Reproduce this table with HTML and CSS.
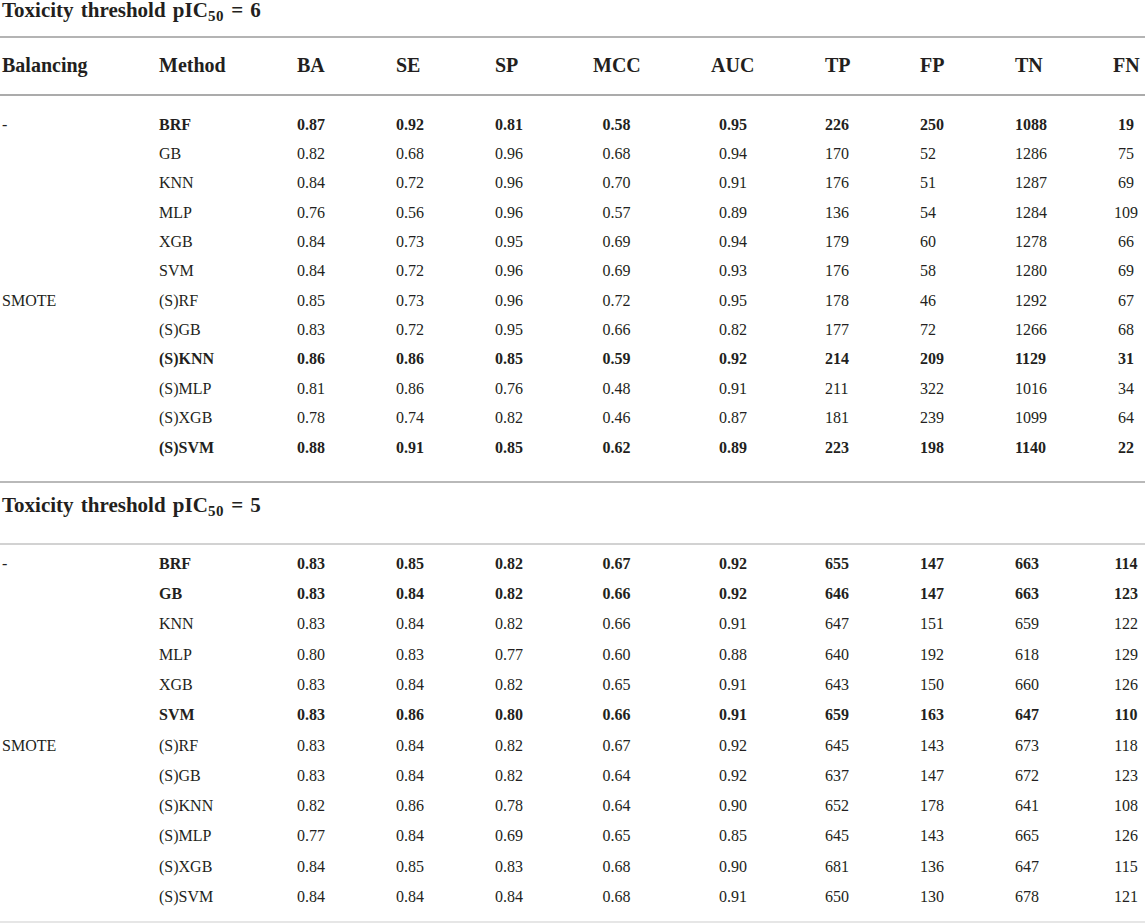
FILE: index.html
```html
<!DOCTYPE html>
<html>
  <head>
    <meta charset="utf-8">
    <title>Toxicity threshold results</title>
    <link rel="stylesheet" href="styles.css">
  </head>
  <body>
    <table class="results">
      <colgroup>
        <col class="c-bal">
        <col class="c-method">
        <col class="c-ba">
        <col class="c-se">
        <col class="c-sp">
        <col class="c-mcc">
        <col class="c-auc">
        <col class="c-tp">
        <col class="c-fp">
        <col class="c-tn">
        <col class="c-fn">
      </colgroup>

      <!-- pIC50 = 6 -->
      <tbody class="sec sec-6">
        <tr class="sec-title">
          <th colspan="11">Toxicity threshold pIC<sub>50</sub> = 6</th>
        </tr>
        <tr class="head">
          <th>Balancing</th><th>Method</th><th>BA</th><th>SE</th><th>SP</th><th>MCC</th><th>AUC</th><th>TP</th><th>FP</th><th>TN</th><th>FN</th>
        </tr>
        <tr class="first best"><td>-</td><td>BRF</td><td>0.87</td><td>0.92</td><td>0.81</td><td>0.58</td><td>0.95</td><td>226</td><td>250</td><td>1088</td><td>19</td></tr>
        <tr><td></td><td>GB</td><td>0.82</td><td>0.68</td><td>0.96</td><td>0.68</td><td>0.94</td><td>170</td><td>52</td><td>1286</td><td>75</td></tr>
        <tr><td></td><td>KNN</td><td>0.84</td><td>0.72</td><td>0.96</td><td>0.70</td><td>0.91</td><td>176</td><td>51</td><td>1287</td><td>69</td></tr>
        <tr><td></td><td>MLP</td><td>0.76</td><td>0.56</td><td>0.96</td><td>0.57</td><td>0.89</td><td>136</td><td>54</td><td>1284</td><td>109</td></tr>
        <tr><td></td><td>XGB</td><td>0.84</td><td>0.73</td><td>0.95</td><td>0.69</td><td>0.94</td><td>179</td><td>60</td><td>1278</td><td>66</td></tr>
        <tr><td></td><td>SVM</td><td>0.84</td><td>0.72</td><td>0.96</td><td>0.69</td><td>0.93</td><td>176</td><td>58</td><td>1280</td><td>69</td></tr>
        <tr><td>SMOTE</td><td>(S)RF</td><td>0.85</td><td>0.73</td><td>0.96</td><td>0.72</td><td>0.95</td><td>178</td><td>46</td><td>1292</td><td>67</td></tr>
        <tr><td></td><td>(S)GB</td><td>0.83</td><td>0.72</td><td>0.95</td><td>0.66</td><td>0.82</td><td>177</td><td>72</td><td>1266</td><td>68</td></tr>
        <tr class="best"><td></td><td>(S)KNN</td><td>0.86</td><td>0.86</td><td>0.85</td><td>0.59</td><td>0.92</td><td>214</td><td>209</td><td>1129</td><td>31</td></tr>
        <tr><td></td><td>(S)MLP</td><td>0.81</td><td>0.86</td><td>0.76</td><td>0.48</td><td>0.91</td><td>211</td><td>322</td><td>1016</td><td>34</td></tr>
        <tr><td></td><td>(S)XGB</td><td>0.78</td><td>0.74</td><td>0.82</td><td>0.46</td><td>0.87</td><td>181</td><td>239</td><td>1099</td><td>64</td></tr>
        <tr class="last best"><td></td><td>(S)SVM</td><td>0.88</td><td>0.91</td><td>0.85</td><td>0.62</td><td>0.89</td><td>223</td><td>198</td><td>1140</td><td>22</td></tr>
      </tbody>

      <!-- pIC50 = 5 -->
      <tbody class="sec sec-5">
        <tr class="sec-title">
          <th colspan="11">Toxicity threshold pIC<sub>50</sub> = 5</th>
        </tr>
        <tr class="first best"><td>-</td><td>BRF</td><td>0.83</td><td>0.85</td><td>0.82</td><td>0.67</td><td>0.92</td><td>655</td><td>147</td><td>663</td><td>114</td></tr>
        <tr class="best"><td></td><td>GB</td><td>0.83</td><td>0.84</td><td>0.82</td><td>0.66</td><td>0.92</td><td>646</td><td>147</td><td>663</td><td>123</td></tr>
        <tr><td></td><td>KNN</td><td>0.83</td><td>0.84</td><td>0.82</td><td>0.66</td><td>0.91</td><td>647</td><td>151</td><td>659</td><td>122</td></tr>
        <tr><td></td><td>MLP</td><td>0.80</td><td>0.83</td><td>0.77</td><td>0.60</td><td>0.88</td><td>640</td><td>192</td><td>618</td><td>129</td></tr>
        <tr><td></td><td>XGB</td><td>0.83</td><td>0.84</td><td>0.82</td><td>0.65</td><td>0.91</td><td>643</td><td>150</td><td>660</td><td>126</td></tr>
        <tr class="best"><td></td><td>SVM</td><td>0.83</td><td>0.86</td><td>0.80</td><td>0.66</td><td>0.91</td><td>659</td><td>163</td><td>647</td><td>110</td></tr>
        <tr><td>SMOTE</td><td>(S)RF</td><td>0.83</td><td>0.84</td><td>0.82</td><td>0.67</td><td>0.92</td><td>645</td><td>143</td><td>673</td><td>118</td></tr>
        <tr><td></td><td>(S)GB</td><td>0.83</td><td>0.84</td><td>0.82</td><td>0.64</td><td>0.92</td><td>637</td><td>147</td><td>672</td><td>123</td></tr>
        <tr><td></td><td>(S)KNN</td><td>0.82</td><td>0.86</td><td>0.78</td><td>0.64</td><td>0.90</td><td>652</td><td>178</td><td>641</td><td>108</td></tr>
        <tr><td></td><td>(S)MLP</td><td>0.77</td><td>0.84</td><td>0.69</td><td>0.65</td><td>0.85</td><td>645</td><td>143</td><td>665</td><td>126</td></tr>
        <tr><td></td><td>(S)XGB</td><td>0.84</td><td>0.85</td><td>0.83</td><td>0.68</td><td>0.90</td><td>681</td><td>136</td><td>647</td><td>115</td></tr>
        <tr class="last"><td></td><td>(S)SVM</td><td>0.84</td><td>0.84</td><td>0.84</td><td>0.68</td><td>0.91</td><td>650</td><td>130</td><td>678</td><td>121</td></tr>
      </tbody>
    </table>
  </body>
</html>
```

FILE: styles.css
```css
body {
  margin: 0;
  overflow: hidden;
  background: #fff;
  color: #231f20;
  font-family: "Liberation Serif", "Times New Roman", serif;
}
.results {
  table-layout: fixed;
  border-collapse: separate;
  border-spacing: 0;
  width: 1153px;
}
.results th,
.results td {
  padding: 0 0 0 2px;
  text-align: left;
  vertical-align: top;
  white-space: nowrap;
}
.c-bal { width: 157px; }
.c-method { width: 138px; }
.c-ba { width: 99px; }
.c-se { width: 99px; }
.c-sp { width: 98px; }
.c-mcc { width: 118px; }
.c-auc { width: 114px; }
.c-tp { width: 95px; }
.c-fp { width: 95px; }
.c-tn { width: 98px; }
.c-fn { width: 42px; }

/* section titles */
.sec-title th {
  font-size: 21px;
  line-height: 20px;
  font-weight: bold;
  word-spacing: 2px;
}
.sec-title sub {
  font-size: 15px;
  line-height: 0;
  letter-spacing: 0.5px;
  vertical-align: -4px;
}
.sec-6 .sec-title th {
  padding-bottom: 16px;
  border-bottom: 2px solid #b4b4b4;
}
.sec-5 .sec-title th {
  padding-top: 12.7px;
  padding-bottom: 28px;
  border-bottom: 2px solid #d2d2d2;
}

/* column heads */
.head th {
  font-size: 20px;
  line-height: 20px;
  font-weight: bold;
  padding-top: 17.4px;
  padding-bottom: 18.9px;
  border-bottom: 2px solid #ababab;
}

/* data rows */
.results td {
  font-size: 16px;
}
.sec-6 td {
  line-height: 29.36px;
}
.sec-5 td {
  line-height: 30.3px;
}
.best td {
  font-weight: bold;
}
.best td:first-child {
  font-weight: normal;
}
.sec-6 .first td {
  padding-top: 13.3px;
}
.sec-6 .last td {
  padding-bottom: 18.7px;
  border-bottom: 2px solid #b9b9b9;
}
.sec-5 .first td {
  padding-top: 3.5px;
}
.sec-5 .last td {
  padding-bottom: 8.6px;
  border-bottom: 2px solid #e6e6e6;
}

/* MCC, AUC and FN values sit centred under their heads */
.results td:nth-child(6) {
  text-align: center;
  padding-right: 69px;
}
.results td:nth-child(7) {
  text-align: center;
  padding-right: 68px;
}
.results td:nth-child(11) {
  text-align: center;
  padding-right: 14px;
}
```
